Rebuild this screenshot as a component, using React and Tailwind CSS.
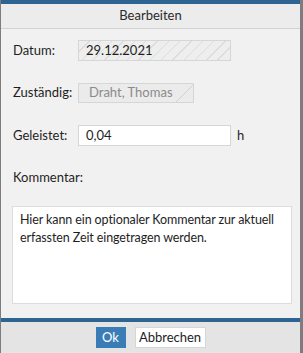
import React from 'react';

const font = { fontFamily: 'Lato, "Open Sans", sans-serif' };

const Label = ({ children }) => (
  <div className="w-[66px] shrink-0 pl-[1px] text-[13px] text-[#1e1e1e]">{children}</div>
);

export default function App() {
  return (
    <div className="flex h-[353px] w-[303px] bg-[#7d7d7d]" style={font}>
      <div className="ml-[1px] flex w-[299px] flex-col">
        <div className="h-[4px] bg-[#2d6491]" />
        <div className="flex h-[25px] items-center justify-center border-b border-[#d2d2d2] bg-[#ececec] text-[13px] text-[#2a2a2a]">
          Bearbeiten
        </div>

        <div className="flex flex-1 flex-col bg-[#f1f1f1] px-[11px] pt-[11px]">
          <div className="flex items-center">
            <Label>Datum:</Label>
            <div className="flex h-[21px] w-[153px] items-center border border-[#d6d6d6] bg-[#eeeeee] bg-[repeating-linear-gradient(135deg,transparent_0_7px,#dcdcdc_7px_8px)] pl-[7px] text-[13px] text-[#1e1e1e]">
              29.12.2021
            </div>
          </div>

          <div className="mt-[22px] flex items-center">
            <Label>Zuständig:</Label>
            <div className="flex h-[20px] w-[116px] border border-[#d6d6d6] bg-[#ebebeb] text-[13px] text-[#8a8a8a]">
              <div className="flex flex-1 items-center whitespace-nowrap pl-[10px]">Draht, Thomas</div>
              <svg width="19" height="18" viewBox="0 0 19 18" className="shrink-0">
                <line x1="2" y1="18" x2="19" y2="1" stroke="#d2d2d2" strokeWidth="1" />
              </svg>
            </div>
          </div>

          <div className="mt-[22px] flex items-center">
            <Label>Geleistet:</Label>
            <div className="flex h-[21px] w-[153px] items-center border border-[#d6d6d6] bg-white pl-[7px] text-[13px] text-[#1e1e1e]">
              0,04
            </div>
            <span className="ml-[6px] text-[13px] text-[#1e1e1e]">h</span>
          </div>

          <div className="mt-[22px] pl-[1px] text-[13px] text-[#1e1e1e]">Kommentar:</div>

          <div className="mt-[18px] h-[98px] w-[280px] border border-[#dcdcdc] bg-white pl-[7px] pr-[4px] pt-[4px] text-[12.5px] leading-[18px] tracking-[-0.1px] text-[#1e1e1e]">
            Hier kann ein optionaler Kommentar zur aktuell erfassten Zeit eingetragen werden.
          </div>
        </div>

        <div className="h-[4px] bg-[#2d6491]" />
        <div className="flex h-[31px] items-center justify-center gap-[9px] bg-[#e4e4e4]">
          <button className="flex h-[21px] w-[30px] items-center justify-center bg-[#3a7db6] text-[13px] text-white">
            Ok
          </button>
          <button className="flex h-[21px] w-[71px] items-center justify-center border border-[#d6d6d6] bg-white text-[13px] text-[#1e1e1e]">
            Abbrechen
          </button>
        </div>
      </div>
    </div>
  );
}
